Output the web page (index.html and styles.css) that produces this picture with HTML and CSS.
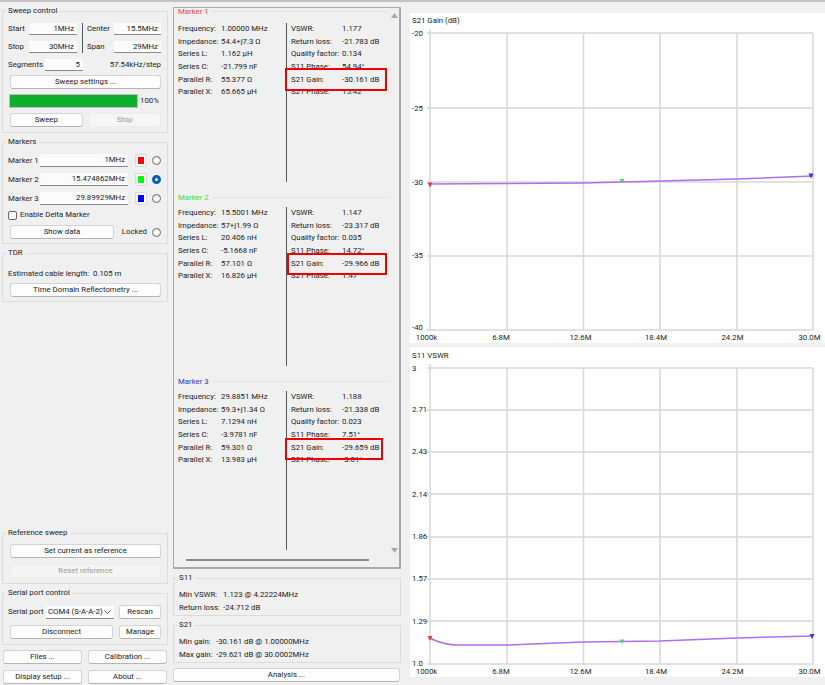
FILE: index.html
```html
<!DOCTYPE html>
<html lang="en">
<head>
<meta charset="utf-8">
<title>NanoVNA Saver</title>
<link rel="stylesheet" href="styles.css">
</head>
<body>
<div class="app">
  <aside class="left">
    <fieldset class="group sweep">
      <legend>Sweep control</legend>
      <div class="freq">
        <span>Start</span><div class="field">1MHz</div>
        <div class="vline"></div>
        <span>Center</span><div class="field">15.5MHz</div>
        <span>Stop</span><div class="field">30MHz</div>
        <span>Span</span><div class="field">29MHz</div>
      </div>
      <div class="segments">
        <span class="seg-label">Segments</span><div class="field seg-field">5</div>
        <span class="step">57.54kHz/step</span>
      </div>
      <button class="btn sweep-settings">Sweep settings ...</button>
      <div class="progress-row"><div class="progress"></div><span>100%</span></div>
      <div class="btn-row sweep-btns">
        <button class="btn">Sweep</button>
        <button class="btn off">Stop</button>
      </div>
    </fieldset>

    <fieldset class="group markers">
      <legend>Markers</legend>
      <div class="marker-row">
        <span class="mk-label">Marker 1</span><div class="field mk-field">1MHz</div>
        <div class="swatch"><i class="c-red"></i></div><span class="radio"></span>
      </div>
      <div class="marker-row">
        <span class="mk-label">Marker 2</span><div class="field mk-field">15.474862MHz</div>
        <div class="swatch"><i class="c-green"></i></div><span class="radio on"></span>
      </div>
      <div class="marker-row">
        <span class="mk-label">Marker 3</span><div class="field mk-field">29.89929MHz</div>
        <div class="swatch"><i class="c-blue"></i></div><span class="radio"></span>
      </div>
      <label class="check-row"><span class="check"></span>Enable Delta Marker</label>
      <div class="show-row">
        <button class="btn show">Show data</button>
        <span class="locked">Locked</span><span class="radio"></span>
      </div>
    </fieldset>

    <fieldset class="group tdr">
      <legend>TDR</legend>
      <div class="tdr-line">Estimated cable length: <span class="tdr-val">0.105 m</span></div>
      <button class="btn wide">Time Domain Reflectometry ...</button>
    </fieldset>

    <div class="spacer"></div>

    <fieldset class="group reference">
      <legend>Reference sweep</legend>
      <button class="btn wide">Set current as reference</button>
      <button class="btn wide off reset">Reset reference</button>
    </fieldset>

    <fieldset class="group serial">
      <legend>Serial port control</legend>
      <div class="port-row">
        <span class="port-label">Serial port</span>
        <div class="select"><span>COM4 (S-A-A-2)</span><svg width="7" height="4" viewBox="0 0 7 4"><path d="M.5.5 3.5 3.5 6.5.5" fill="none" stroke="#555"/></svg></div>
        <button class="btn side">Rescan</button>
      </div>
      <div class="port-row row2">
        <button class="btn grow">Disconnect</button>
        <button class="btn side">Manage</button>
      </div>
    </fieldset>

    <div class="foot">
      <button class="btn">Files ...</button>
      <button class="btn">Calibration ...</button>
      <button class="btn">Display setup ...</button>
      <button class="btn">About ...</button>
    </div>
  </aside>

  <main class="middle">
    <div class="scroll">
      <div class="scroll-main">
        <div class="scroll-content">
          <fieldset class="mk-sec">
            <legend class="t-red">Marker 1</legend>
            <div class="mk-body">
              <div class="mk-col first">
                <div class="r"><b>Frequency:</b><span>1.00000 MHz</span></div>
                <div class="r"><b>Impedance:</b><span>54.4+j7.3 Ω</span></div>
                <div class="r"><b>Series L:</b><span>1.162 μH</span></div>
                <div class="r"><b>Series C:</b><span>-21.799 nF</span></div>
                <div class="r"><b>Parallel R:</b><span>55.377 Ω</span></div>
                <div class="r"><b>Parallel X:</b><span>65.665 μH</span></div>
              </div>
              <div class="mk-col second">
                <div class="r"><b>VSWR:</b><span>1.177</span></div>
                <div class="r"><b>Return loss:</b><span>-21.783 dB</span></div>
                <div class="r"><b>Quality factor:</b><span>0.134</span></div>
                <div class="r"><b>S11 Phase:</b><span>54.94°</span></div>
                <div class="r hl hl-1"><b>S21 Gain:</b><span>-30.161 dB</span></div>
                <div class="r"><b>S21 Phase:</b><span>15.42°</span></div>
              </div>
            </div>
          </fieldset>
          <fieldset class="mk-sec">
            <legend class="t-green">Marker 2</legend>
            <div class="mk-body">
              <div class="mk-col first">
                <div class="r"><b>Frequency:</b><span>15.5001 MHz</span></div>
                <div class="r"><b>Impedance:</b><span>57+j1.99 Ω</span></div>
                <div class="r"><b>Series L:</b><span>20.406 nH</span></div>
                <div class="r"><b>Series C:</b><span>-5.1668 nF</span></div>
                <div class="r"><b>Parallel R:</b><span>57.101 Ω</span></div>
                <div class="r"><b>Parallel X:</b><span>16.826 μH</span></div>
              </div>
              <div class="mk-col second">
                <div class="r"><b>VSWR:</b><span>1.147</span></div>
                <div class="r"><b>Return loss:</b><span>-23.317 dB</span></div>
                <div class="r"><b>Quality factor:</b><span>0.035</span></div>
                <div class="r"><b>S11 Phase:</b><span>14.72°</span></div>
                <div class="r hl hl-2"><b>S21 Gain:</b><span>-29.966 dB</span></div>
                <div class="r"><b>S21 Phase:</b><span>1.47°</span></div>
              </div>
            </div>
          </fieldset>
          <fieldset class="mk-sec">
            <legend class="t-blue">Marker 3</legend>
            <div class="mk-body">
              <div class="mk-col first">
                <div class="r"><b>Frequency:</b><span>29.8851 MHz</span></div>
                <div class="r"><b>Impedance:</b><span>59.3+j1.34 Ω</span></div>
                <div class="r"><b>Series L:</b><span>7.1294 nH</span></div>
                <div class="r"><b>Series C:</b><span>-3.9781 nF</span></div>
                <div class="r"><b>Parallel R:</b><span>59.301 Ω</span></div>
                <div class="r"><b>Parallel X:</b><span>13.983 μH</span></div>
              </div>
              <div class="mk-col second">
                <div class="r"><b>VSWR:</b><span>1.188</span></div>
                <div class="r"><b>Return loss:</b><span>-21.338 dB</span></div>
                <div class="r"><b>Quality factor:</b><span>0.023</span></div>
                <div class="r"><b>S11 Phase:</b><span>7.51°</span></div>
                <div class="r hl hl-3"><b>S21 Gain:</b><span>-29.659 dB</span></div>
                <div class="r"><b>S21 Phase:</b><span>-3.01°</span></div>
              </div>
            </div>
          </fieldset>
        </div>
        <div class="vbar">
          <svg width="7" height="5" viewBox="0 0 7 5"><path d="M3.5 0 7 5H0z" fill="#a8a8a8"/></svg>
          <svg width="7" height="5" viewBox="0 0 7 5"><path d="M3.5 5 7 0H0z" fill="#a8a8a8"/></svg>
        </div>
      </div>
      <div class="hbar"><div class="thumb"></div></div>
    </div>

    <fieldset class="group s-box s11">
      <legend>S11</legend>
      <div class="s-row"><span class="s11-k">Min VSWR:</span><span>1.123 @ 4.22224MHz</span></div>
      <div class="s-row"><span class="s11-k">Return loss:</span><span>-24.712 dB</span></div>
    </fieldset>
    <fieldset class="group s-box s21">
      <legend>S21</legend>
      <div class="s-row"><span class="s21-k">Min gain:</span><span>-30.161 dB @ 1.00000MHz</span></div>
      <div class="s-row"><span class="s21-k">Max gain:</span><span>-29.621 dB @ 30.0002MHz</span></div>
    </fieldset>
    <button class="btn analysis">Analysis ...</button>
  </main>

  <section class="charts">
    <svg class="chart" width="415" height="330" viewBox="0 0 415 330">
      <g class="grid">
        <path d="M20 16V317M97 20V317M173.5 20V317M250 20V317M327 20V317M403 20V317"/>
        <path d="M17 20H403M17 95H403M17 169H403M17 243H403M17 317H403"/>
      </g>
      <text x="2" y="10">S21 Gain (dB)</text>
      <g class="ylab">
        <text x="2" y="23">-20</text><text x="2" y="98">-25</text><text x="2" y="172">-30</text><text x="2" y="245">-35</text><text x="2" y="317">-40</text>
      </g>
      <g class="xlab">
        <text x="16.500" y="327">1000k</text><text x="91" y="327">6.8M</text><text x="170.500" y="327">12.6M</text><text x="246" y="327">18.4M</text><text x="322.500" y="327">24.2M</text><text x="399.500" y="327">30.0M</text>
      </g>
      <path class="trace" d="M20 171 97 170.5 173.5 170 250 168 327 166 403 163"/>
      <path class="mk" fill="#e03a4a" d="M17.5 169.5h5l-2.5 5z"/>
      <path class="mk" fill="#3fe05a" d="M209.5 166h5l-2.5 4.5z"/>
      <path class="mk" fill="#3a35d8" d="M398.5 160.5h5l-2.5 5z"/>
    </svg>
    <svg class="chart" width="415" height="330" viewBox="0 0 415 330">
      <g class="grid">
        <path d="M20 17V317M97 21V317M173.5 21V317M250 21V317M327 21V317M403 21V317"/>
        <path d="M17 21H403M17 63H403M17 105H403M17 147H403M17 190H403M17 232H403M17 274H403M17 317H403"/>
      </g>
      <text x="2" y="11">S11 VSWR</text>
      <g class="ylab">
        <text x="2" y="24">3</text><text x="2" y="65">2.71</text><text x="2" y="107">2.43</text><text x="2" y="150">2.14</text><text x="2" y="192">1.86</text><text x="2" y="234">1.57</text><text x="2" y="277">1.29</text><text x="2" y="319">1.0</text>
      </g>
      <g class="xlab">
        <text x="16.500" y="327">1000k</text><text x="91" y="327">6.8M</text><text x="170.500" y="327">12.6M</text><text x="246" y="327">18.4M</text><text x="322.500" y="327">24.2M</text><text x="399.500" y="327">30.0M</text>
      </g>
      <path class="trace" d="M20 291C27 295 33 297 45 298H97L135 296.500 173.500 295 250 294 327 291 403 289"/>
      <path class="mk" fill="#e03a4a" d="M17.500 289h5l-2.500 5z"/>
      <path class="mk" fill="#3fe05a" d="M209.500 292.500h5l-2.500 4.500z"/>
      <path class="mk" fill="#3a35d8" d="M399.500 287h5l-2.500 5z"/>
    </svg>
  </section>
</div>
</body>
</html>
```
FILE: styles.css
```css
* { box-sizing: border-box; }
html, body { margin: 0; height: 100%; }
body {
  background: #f0f0f0;
  border-top: 2px solid #c2c2c2;
  font: 7.8px/12px Roboto, sans-serif;
  color: #222;
  overflow: hidden;
}
.app { display: flex; height: 682px; }

/* left column */
.left { width: 166px; margin-left: 2px; padding-top: 3px; display: flex; flex-direction: column; flex: none; }
.group {
  margin: 0 0 3px;
  padding: 6px 6px 5px 5px;
  border: 1px solid #dcdcdc;
  min-width: 0;
}
.group legend { padding: 0 3px 0 2px; margin-left: -2px; line-height: 12px; }
.spacer { flex: 1; }

.field {
  height: 12px;
  background: #fbfbfb;
  border-bottom: 1px solid #8a8a8a;
  text-align: right;
  padding-right: 3px;
  line-height: 12px;
}
.btn {
  display: block;
  height: 14px;
  padding: 0;
  font: inherit;
  line-height: 12px;
  color: #222;
  background: #fdfdfd;
  border: 1px solid #d4d4d4;
  border-bottom-color: #b4b4b4;
  border-radius: 3px;
}
.btn.off { color: #9a9a9a; background: #f5f5f5; border-color: #ececec; }
.wide { width: 151px; margin-left: 2px; }

.freq { display: grid; grid-template-columns: 21px 48px 10px 27px 47px; row-gap: 6px; align-items: center; }
.vline { grid-row: 1 / span 2; grid-column: 3; width: 1px; height: 30px; background: #555; margin-left: 5px; }
.segments { display: flex; margin-top: 5px; height: 13px; align-items: center; }
.seg-label { width: 37px; }
.seg-field { width: 38px; }
.step { margin-left: auto; }
.sweep-settings { width: 151px; margin: 4px 0 0 2px; }
.progress-row { display: flex; align-items: center; gap: 2px; margin: 5px 0 0 1px; height: 14px; }
.progress { width: 129px; height: 14px; background: #0cb02c; border: 1px solid #bdbdbd; }
.btn-row { display: flex; gap: 6px; margin: 5px 0 0 2px; }
.btn-row .btn { width: 73px; height: 14px; }
.sweep { padding-bottom: 5px; }

.marker-row { display: flex; align-items: center; height: 13px; margin-bottom: 6px; }
.mk-label { width: 33px; }
.mk-field { width: 90px; height: 13px; }
.swatch { width: 12px; height: 13px; margin-left: 7px; background: #fdfdfd; border: 1px solid #d8d8d8; border-radius: 2px; padding: 2px 2px; }
.swatch i { display: block; width: 6px; height: 7px; }
.c-red { background: #ff0000; }
.c-green { background: #00ff00; }
.c-blue { background: #0000ff; }
.radio { width: 9px; height: 9px; border-radius: 50%; border: 1px solid #666; background: #f8f8f8; margin-left: 5px; flex: none; }
.radio.on { border: 3px solid #0a5fb5; background: #fff; }
.check-row { display: flex; align-items: center; gap: 3px; height: 12px; margin-top: -2px; }
.check { width: 9px; height: 9px; border: 1px solid #666; border-radius: 2px; background: #f8f8f8; }
.show-row { display: flex; align-items: center; margin-top: 4px; height: 14px; }
.show { width: 109px; margin-left: 2px; }
.locked { margin-left: 8px; }
.markers { padding-bottom: 4px; }

.tdr-line { height: 12px; margin-top: 3px; }
.tdr-val { margin-left: 2px; }
.tdr .wide { margin-top: 3px; height: 14px; }
.tdr { padding-bottom: 4px; }

.reset { margin-top: 6px; }
.reference { padding-top: 5px; padding-bottom: 5px; }

.port-row { display: flex; align-items: center; height: 14px; }
.port-row.row2 { margin: 6px 0 0 2px; }
.port-label { width: 38px; white-space: nowrap; }
.select { width: 68px; height: 13px; display: flex; align-items: center; justify-content: space-between; padding: 0 3px 0 2px; background: #fbfbfb; border-bottom: 1px solid #8a8a8a; white-space: nowrap; }
.side { width: 42px; margin-left: auto; }
.grow { width: 103px; }
.serial { margin-bottom: 5px; }

.foot { display: grid; grid-template-columns: 79px 79px; gap: 6px; margin-left: 1px; }
.foot .btn { width: 79px; height: 14px; }

/* middle column */
.middle { width: 228px; margin-left: 5px; padding-top: 5px; flex: none; display: flex; flex-direction: column; }
.scroll { height: 562px; border: 2px solid #a8a8a8; border-width: 1px 2px 2px 1px; flex: none; margin-bottom: 2px; display: flex; flex-direction: column; }
.scroll-main { flex: 1; display: flex; min-height: 0; }
.scroll-content { width: 215px; }
.mk-sec { margin: 0; padding: 0 0 0 4px; height: 184px; border: 0; border-top: 1px solid #e2e2e2; min-width: 0; }
.mk-sec:first-child { margin-top: -2px; height: 186px; }
.mk-sec:first-child .mk-body { padding-top: 6px; height: 165px; }
.mk-sec legend { padding: 0 3px 0 2px; margin-left: -2px; line-height: 11px; }
.t-red { color: #f0404a; }
.t-green { color: #35e04a; }
.t-blue { color: #3030d0; }
.mk-body { display: flex; padding-top: 4px; height: 163px; }
.mk-col { display: flex; flex-direction: column; }
.first { width: 108px; }
.second { border-left: 1px solid #555; padding-left: 4px; width: 102px; padding-top: 0; }
.r { display: flex; height: 12.67px; line-height: 12.67px; white-space: nowrap; }
.r b { font-weight: 400; }
.first b { width: 43px; }
.second b { width: 51px; }
.hl { position: relative; }
.hl::after {
  content: "";
  position: absolute;
  left: -6px;
  border: 2px solid #f00000;
}
.hl-1::after { top: -6px; height: 19px; width: 98px; }
.hl-2::after { top: -5px; height: 18px; width: 96px; left: -4px; }
.hl-3::after { top: -4px; height: 18px; width: 94px; }
.vbar { flex: 1; display: flex; flex-direction: column; justify-content: space-between; align-items: center; padding: 5px 0 3px; }
.hbar { height: 11px; padding: 3px 0 0 12px; }
.thumb { width: 183px; height: 2px; background: #8a8a8a; }

.s-box { margin-bottom: 3px; padding: 4px 4px 3px 5px; height: 44px; }
.s-row { display: flex; height: 13px; line-height: 13px; }
.s11-k { width: 44px; }
.s21-k { width: 37px; }
.s11 { margin-top: 1px; }
.s21 { margin-top: 0; margin-bottom: 5px; }
.analysis { width: 227px; }

/* charts */
.charts { margin: 11px 0 0 9px; display: flex; flex-direction: column; gap: 4px; }
.chart { display: block; background: #fff; font-size: 7.8px; fill: #222; }
.grid path { fill: none; stroke: #d8d8d8; stroke-width: 1.5; }
.xlab { text-anchor: middle; }
.trace { fill: none; stroke: #b26cf0; stroke-width: 1.5; }
```
